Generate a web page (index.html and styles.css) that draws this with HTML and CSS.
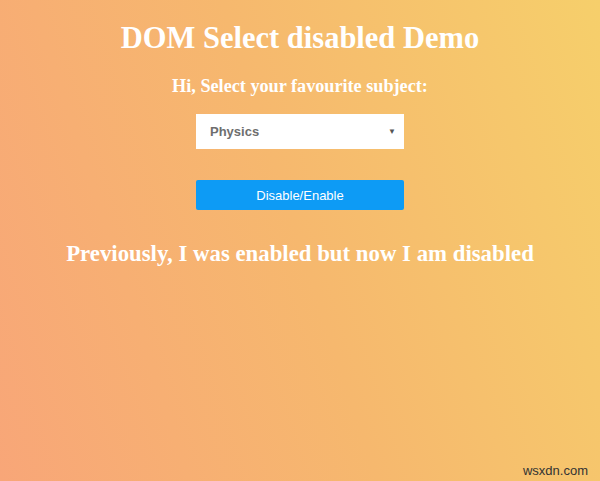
FILE: index.html
```html
<!DOCTYPE html>
<html>
<head>
<meta charset="utf-8">
<link rel="stylesheet" href="styles.css">
</head>
<body>
<main class="page">
  <h1 class="title">DOM Select disabled Demo</h1>
  <h3 class="prompt">Hi, Select your favourite subject:</h3>
  <div class="select">
    <span class="select-value">Physics</span>
    <span class="select-arrow">▼</span>
  </div>
  <button class="toggle">Disable/Enable</button>
  <h2 class="status">Previously, I was enabled but now I am disabled</h2>
</main>
<div class="watermark">wsxdn.com</div>
</body>
</html>
```
FILE: styles.css
```css
html, body {
  margin: 0;
  height: 100%;
}
body {
  background: linear-gradient(72deg, #f8a678 0%, #f6b86e 50%, #f6cf6b 100%);
  font-family: "Liberation Serif", serif;
  color: #fff;
  position: relative;
  overflow: hidden;
}
.page {
  display: flex;
  flex-direction: column;
  align-items: center;
  padding-top: 19px;
}
.title {
  margin: 0;
  font-size: 30.5px;
  line-height: 38px;
  font-weight: bold;
}
.prompt {
  margin: 18px 0 0;
  font-size: 18.2px;
  line-height: 22px;
}
.select {
  margin-top: 17px;
  width: 208px;
  height: 35px;
  background: #fff;
  display: flex;
  align-items: center;
  justify-content: space-between;
  box-sizing: border-box;
  padding: 0 8px 0 14px;
  font-family: "Liberation Sans", Arial, sans-serif;
}
.select-value {
  color: #6e6e6e;
  font-size: 13px;
  font-weight: bold;
}
.select-arrow {
  color: #555;
  font-size: 8px;
}
.toggle {
  margin-top: 31px;
  width: 208px;
  height: 30px;
  border: none;
  border-radius: 2px;
  background: #0d9bf5;
  color: #fff;
  font-family: "Liberation Sans", Arial, sans-serif;
  font-size: 13px;
  padding: 0;
}
.status {
  margin: 30px 0 0;
  font-size: 22.8px;
  line-height: 28px;
}
.watermark {
  position: absolute;
  right: 12px;
  bottom: 3px;
  color: #333;
  font-family: "Liberation Sans", Arial, sans-serif;
  font-size: 13px;
}
```
